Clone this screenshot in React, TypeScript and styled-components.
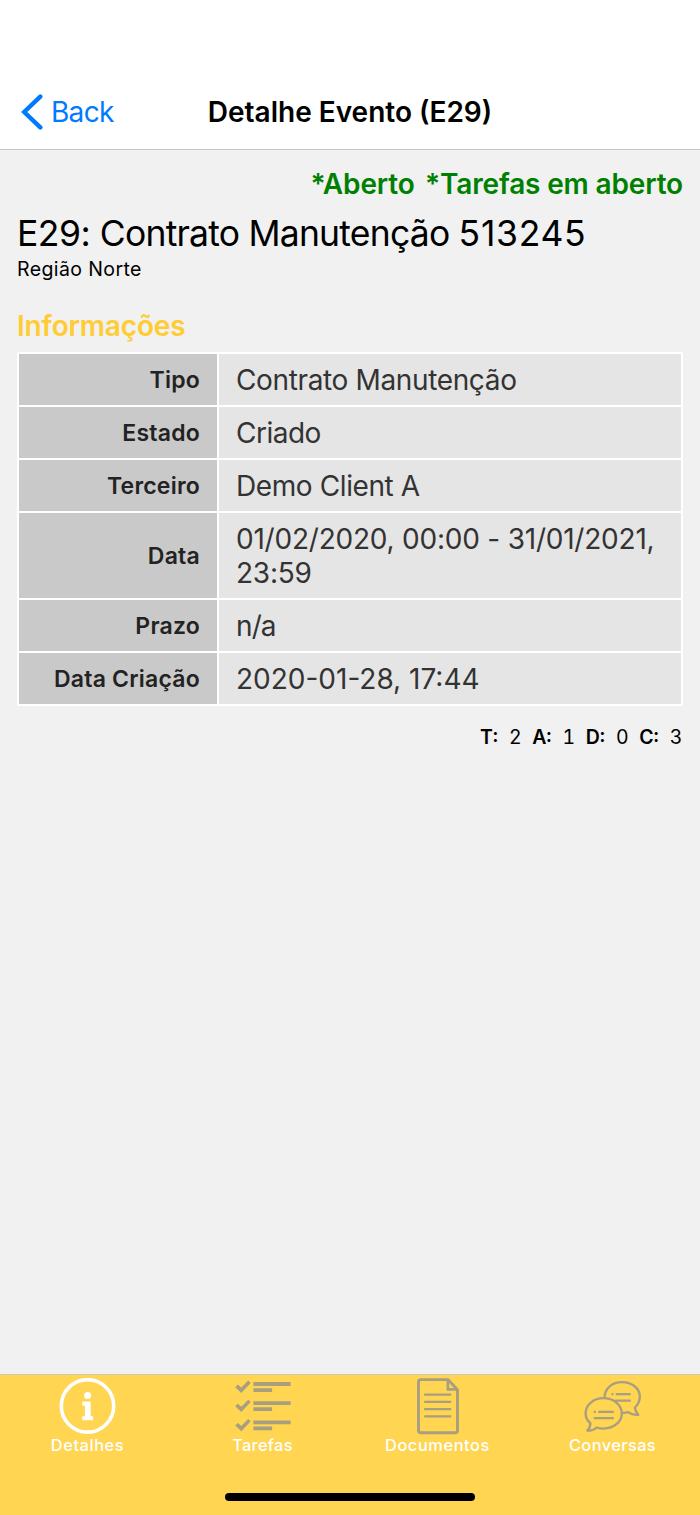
import React from "react";
import styled, { createGlobalStyle } from "styled-components";

const GlobalStyle = createGlobalStyle`
  * { box-sizing: border-box; }
  body {
    margin: 0;
    background: #f1f1f1;
    font-family: Inter, "Liberation Sans", sans-serif;
    color: #000;
  }
`;

const Screen = styled.div`
  display: flex;
  flex-direction: column;
  width: 700px;
  height: 1515px;
  background: #f1f1f1;
  overflow: hidden;
  white-space: nowrap;
`;

const NavBar = styled.header`
  display: grid;
  grid-template-columns: 180px 1fr 180px;
  align-items: center;
  height: 150px;
  padding: 75px 0 0;
  background: #fff;
  border-bottom: 1px solid #c6c6c6;
`;

const BackButton = styled.a`
  display: flex;
  align-items: center;
  padding-left: 21px;
  gap: 7px;
  color: #007aff;
  font-size: 28px;
  letter-spacing: -0.7px;
`;

const NavTitle = styled.h1`
  margin: 0;
  text-align: center;
  font-size: 28px;
  font-weight: 600;
`;

const Content = styled.main`
  flex: 1;
  padding: 16px 17px 0;
`;

const StatusLine = styled.div`
  display: flex;
  justify-content: flex-end;
  gap: 10.5px;
  height: 36px;
  line-height: 36px;
  color: #008000;
  font-size: 28px;
  font-weight: 600;
  letter-spacing: -0.16px;
`;

const EventTitle = styled.h2`
  margin: 9px 0 0;
  height: 46px;
  line-height: 46px;
  font-size: 35.5px;
  font-weight: 400;
  letter-spacing: -0.48px;
`;

const TitleWords = styled.span`
  letter-spacing: -0.78px;
`;

const TitleNumber = styled.span`
  letter-spacing: 0.7px;
`;

const Region = styled.div`
  height: 24px;
  line-height: 24px;
  font-size: 19.5px;
  letter-spacing: 0.4px;
`;

const SectionTitle = styled.h3`
  margin: 27px 0 0;
  height: 36px;
  line-height: 36px;
  color: #ffcc33;
  font-size: 28px;
  font-weight: 600;
  letter-spacing: -0.15px;
`;

const InfoTable = styled.dl`
  display: flex;
  flex-direction: column;
  gap: 2px;
  margin: 8px 0 0;
  padding: 2px;
  background: #fff;
`;

const InfoRow = styled.div<{ $tall?: boolean }>`
  display: grid;
  grid-template-columns: 198px 1fr;
  gap: 2px;
  height: ${(p) => (p.$tall ? 85 : 51)}px;
`;

const Label = styled.dt`
  display: flex;
  align-items: center;
  justify-content: flex-end;
  padding-right: 17px;
  background: #c9c9c9;
  color: #222;
  font-size: 23px;
  font-weight: 600;
  letter-spacing: 0.22px;
`;

const Value = styled.dd<{ $spacing: number }>`
  display: flex;
  align-items: center;
  margin: 0;
  padding: 1px 0 0 17px;
  background: #e5e5e5;
  color: #333;
  font-size: 28px;
  line-height: 34px;
  letter-spacing: ${(p) => p.$spacing}px;
  white-space: pre-line;
`;

const Counters = styled.div`
  display: flex;
  justify-content: flex-end;
  gap: 10.5px;
  margin-top: 19px;
  padding-right: 0.5px;
  line-height: 24px;
  font-size: 19.5px;
  font-variant-numeric: tabular-nums;
`;

const Counter = styled.span`
  display: flex;
  gap: 11px;
`;

const CounterName = styled.b`
  font-weight: 600;
`;

const TabBar = styled.nav`
  display: flex;
  flex-direction: column;
  align-items: center;
  height: 141px;
  border-top: 1px solid #d0c9b0;
  background: #ffd552;
`;

const Tabs = styled.div`
  display: grid;
  grid-template-columns: repeat(4, 1fr);
  width: 100%;
`;

const Tab = styled.a`
  display: flex;
  flex-direction: column;
  align-items: center;
  padding-top: 3px;
  color: #fff;
`;

const TabLabel = styled.span<{ $spacing: number }>`
  line-height: 20px;
  font-size: 16.4px;
  font-weight: 500;
  letter-spacing: ${(p) => p.$spacing}px;
`;

const HomeIndicator = styled.div`
  width: 250px;
  height: 8px;
  margin-top: 38px;
  border-radius: 4px;
  background: #000;
`;

const muted = "#a89e80";

const ChevronLeft = () => (
  <svg width="23" height="36" viewBox="0 0 23 36" fill="none">
    <path d="M19.3 2.6 3.2 18l16.1 15.4" stroke="#007aff" strokeWidth="4.4" strokeLinecap="round" />
  </svg>
);

const InfoIcon = () => (
  <svg width="58" height="57" viewBox="0 0 58 57">
    <circle cx="28.5" cy="27.9" r="26.2" fill="none" stroke="#fff" strokeWidth="3.6" />
    <circle cx="28.6" cy="17.4" r="3.5" fill="#fff" />
    <path d="M23.3 23.5h8.4v14.8h2.4v4H23.3v-4h2.6V27.7h-2.6z" fill="#fff" />
  </svg>
);

const TasksIcon = () => (
  <svg width="58" height="57" viewBox="0 0 58 57">
    {[0, 19.1, 38.3].map((y) => (
      <g key={y} transform={`translate(0 ${y})`}>
        <path d="M1.2 9.2 3.9 6.600 7.300 9.600 14.200 2.600 16.700 4.900 7.300 15z" fill={muted} />
        <path d="M19.4 4.1h37.2v3.800H19.4zM19.4 10.200h18.7V14H19.4z" fill={muted} />
      </g>
    ))}
  </svg>
);

const DocumentIcon = () => (
  <svg width="58" height="57" viewBox="0 0 58 57" fill="none" stroke={muted}>
    <path
      d="M11.7 1.6h27.2l9.6 10.2v40.8q0 2.2-2.2 2.2H11.7q-2.2 0-2.2-2.2V3.8q0-2.2 2.2-2.2z"
      strokeWidth="2.9"
      strokeLinejoin="round"
    />
    <path d="M38.9 2.3V11.4h8.8" strokeWidth="2.7" />
    <path d="M15.2 16.6h27M15.2 23.9h27M15.2 31.1h27M15.2 38.4h27" strokeWidth="2.2" />
  </svg>
);

const ChatIcon = () => (
  <svg width="58" height="57" viewBox="0 0 58 57" fill="none" stroke={muted} strokeWidth="2.3" strokeLinejoin="round">
    <path d="M20.5 19C21 9.500 29 4.200 37.800 4.200 48 4.200 55.800 10.200 55.800 18.500 55.800 23 54.300 26.500 50.800 29.500 51.200 32.500 52.300 34.700 54.300 36.800 50.500 37.300 47 36.500 44.300 34.200 42.300 34.700 40.500 34.900 38.300 34.800" />
    <path d="M19.500 20.200C29.500 20.200 37.800 26.800 37.800 35.400S29.500 50.600 19.500 50.600C17 50.600 14.800 50.300 12.700 49.500 10.200 51.900 7 53 3.300 52.500 5.300 50.400 6.400 48.200 6.400 45.200 3.200 42.500 1.600 39.100 1.600 35.400 1.600 26.800 9.500 20.200 19.500 20.200z" />
    <path d="M31.800 16.200h14.900M31.200 22.600h15.500M14.300 33.800h15.500M9.800 40.200h20M27.500 16.200h2M9.800 33.800h2" />
  </svg>
);

const rows = [
  { label: "Tipo", value: "Contrato Manutenção", spacing: -0.36 },
  { label: "Estado", value: "Criado", spacing: -0.5 },
  { label: "Terceiro", value: "Demo Client A", spacing: -0.4 },
  { label: "Data", value: "01/02/2020, 00:00 - 31/01/2021,\n23:59", spacing: -0.22, tall: true },
  { label: "Prazo", value: "n/a", spacing: -0.9 },
  { label: "Data Criação", value: "2020-01-28, 17:44", spacing: 0 },
];

const counters = [
  ["T:", "2"],
  ["A:", "1"],
  ["D:", "0"],
  ["C:", "3"],
];

const tabs = [
  { label: "Detalhes", Icon: InfoIcon, spacing: 0.55 },
  { label: "Tarefas", Icon: TasksIcon, spacing: 0.3 },
  { label: "Documentos", Icon: DocumentIcon, spacing: 0.58 },
  { label: "Conversas", Icon: ChatIcon, spacing: 0.4 },
];

export default function App() {
  return (
    <Screen>
      <GlobalStyle />
      <NavBar>
        <BackButton>
          <ChevronLeft />
          <span>Back</span>
        </BackButton>
        <NavTitle>Detalhe Evento (E29)</NavTitle>
      </NavBar>
      <Content>
        <StatusLine>
          <span>*Aberto</span>
          <span>*Tarefas em aberto</span>
        </StatusLine>
        <EventTitle>
          E29: <TitleWords>Contrato Manutenção </TitleWords>
          <TitleNumber>513245</TitleNumber>
        </EventTitle>
        <Region>Região Norte</Region>
        <SectionTitle>Informações</SectionTitle>
        <InfoTable>
          {rows.map((row) => (
            <InfoRow key={row.label} $tall={row.tall}>
              <Label>{row.label}</Label>
              <Value $spacing={row.spacing}>{row.value}</Value>
            </InfoRow>
          ))}
        </InfoTable>
        <Counters>
          {counters.map(([name, count]) => (
            <Counter key={name}>
              <CounterName>{name}</CounterName>
              <span>{count}</span>
            </Counter>
          ))}
        </Counters>
      </Content>
      <TabBar>
        <Tabs>
          {tabs.map(({ label, Icon, spacing }) => (
            <Tab key={label}>
              <Icon />
              <TabLabel $spacing={spacing}>{label}</TabLabel>
            </Tab>
          ))}
        </Tabs>
        <HomeIndicator />
      </TabBar>
    </Screen>
  );
}
